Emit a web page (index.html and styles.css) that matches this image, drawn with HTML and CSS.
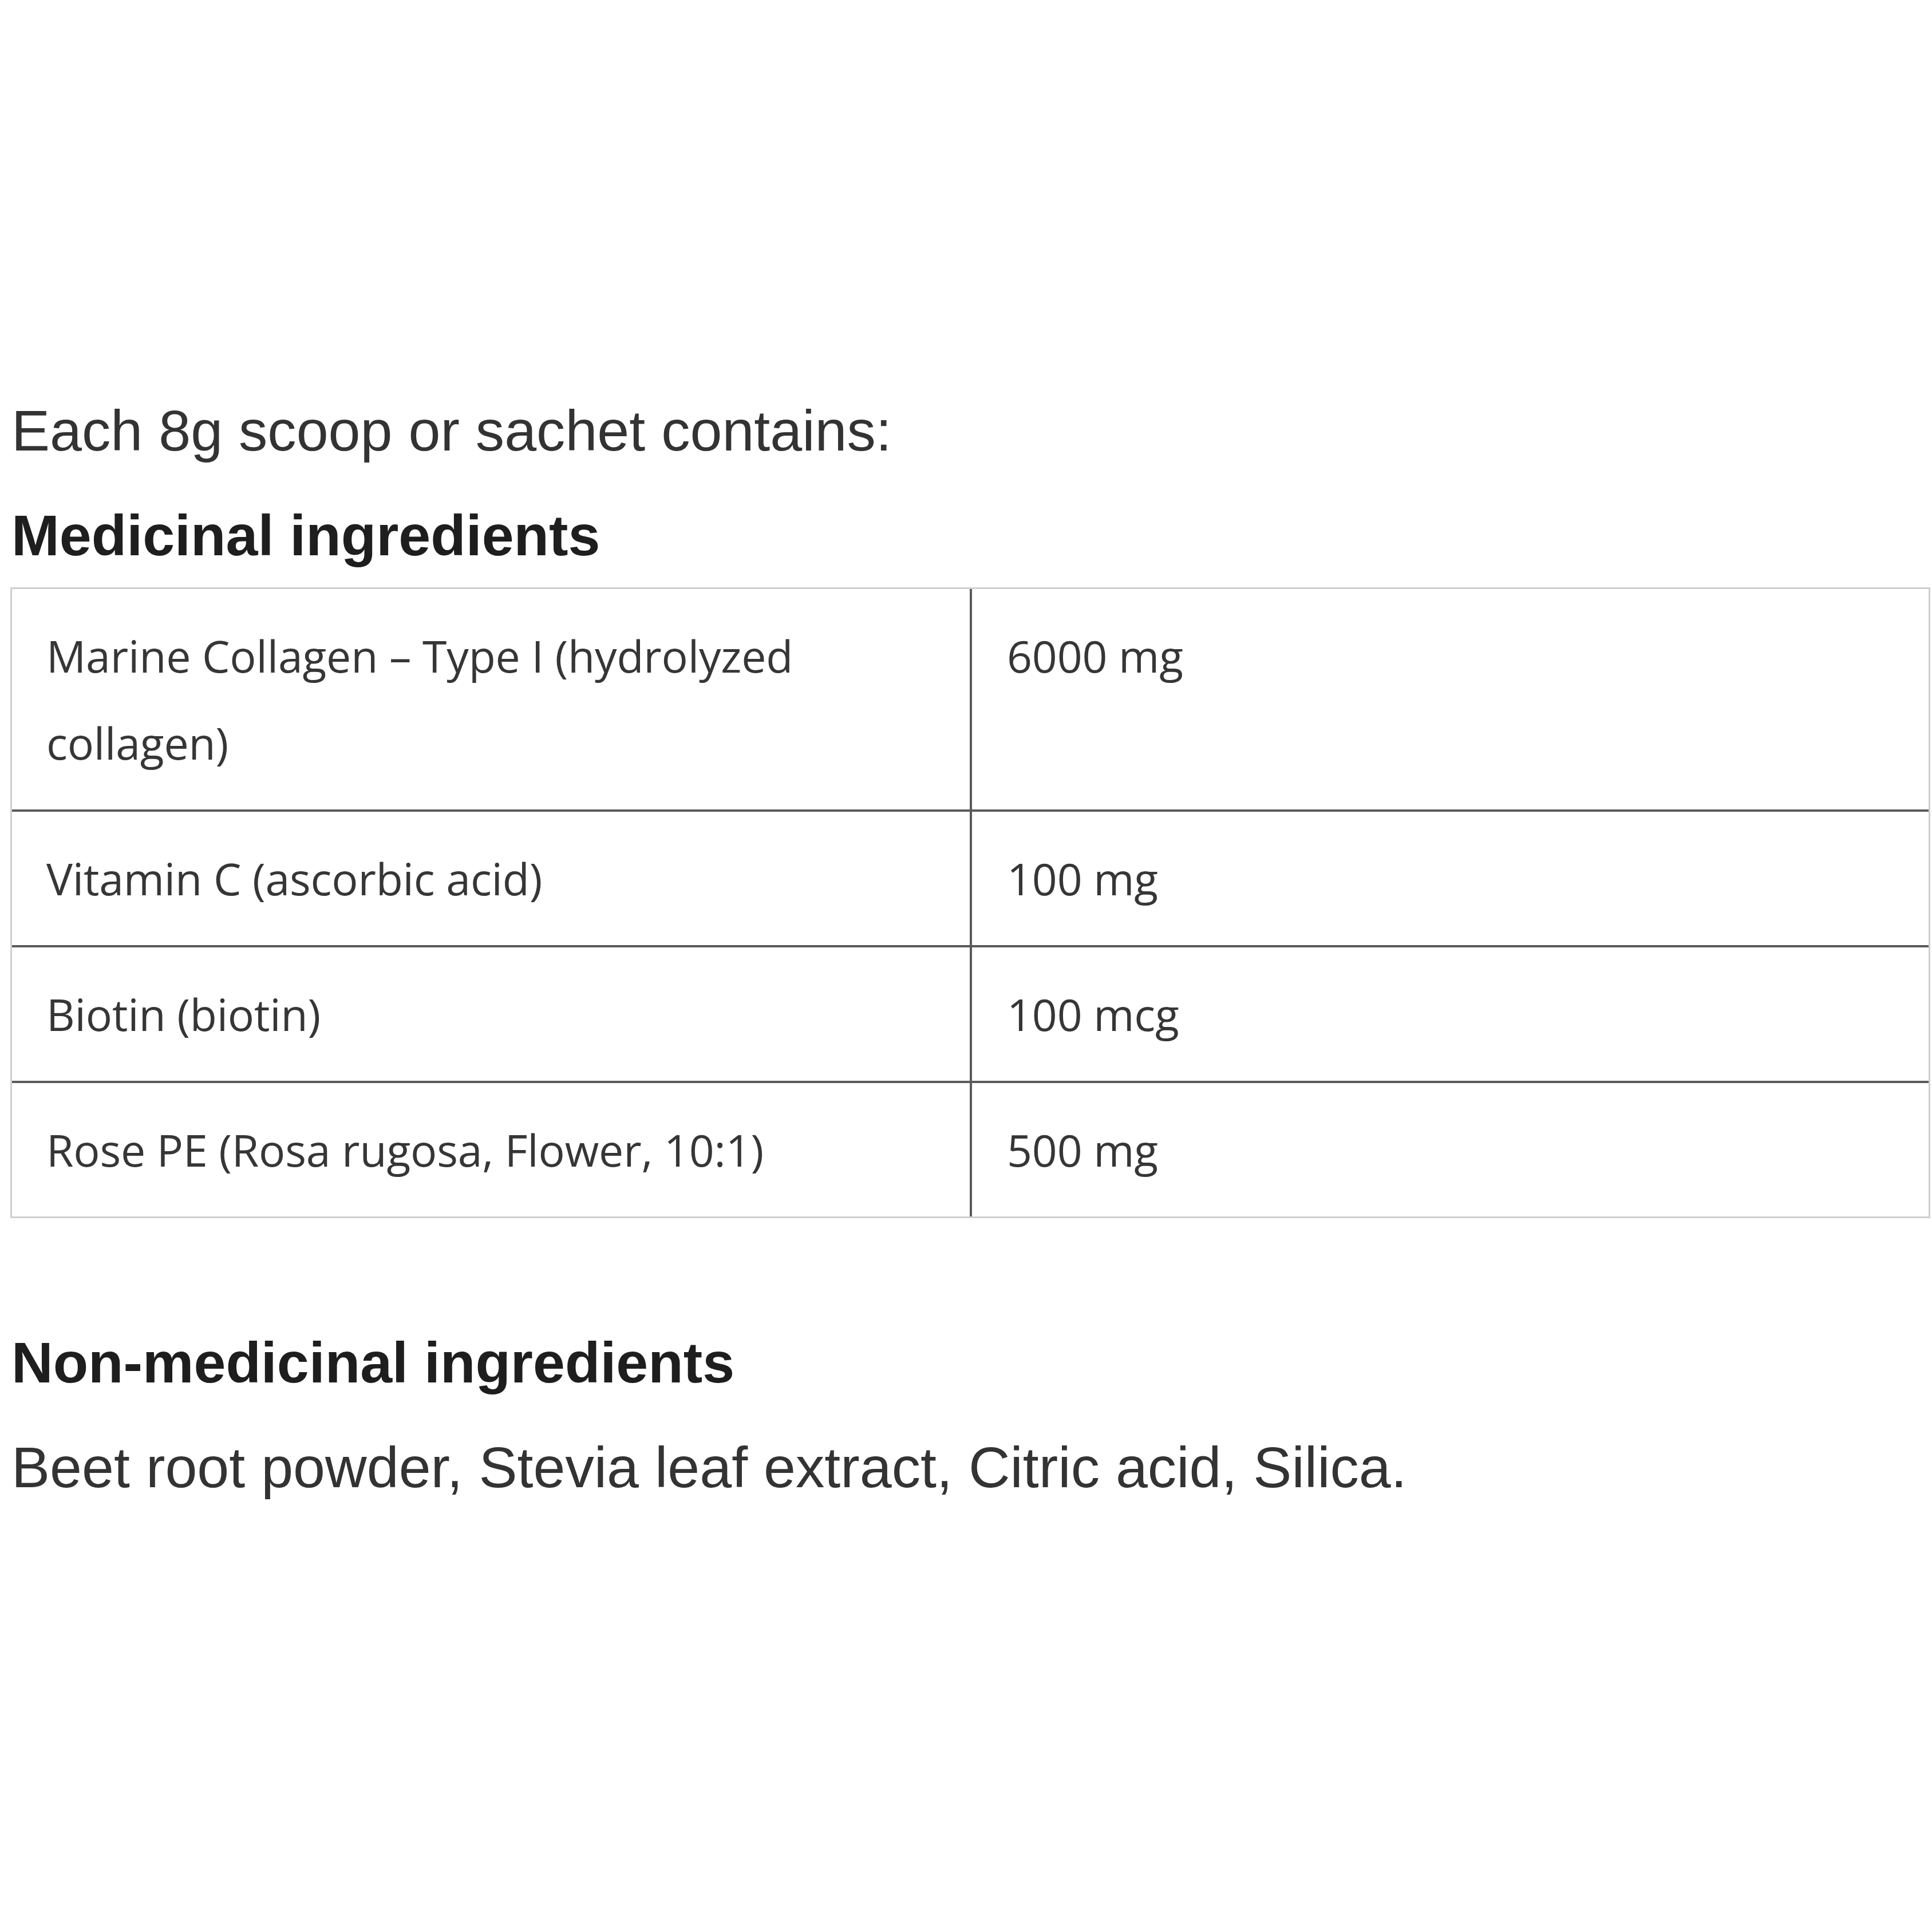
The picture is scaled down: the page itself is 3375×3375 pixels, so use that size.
FILE: index.html
```html
<!DOCTYPE html>
<html lang="en">
<head>
<meta charset="utf-8">
<title>Ingredients</title>
<link rel="stylesheet" href="styles.css">
</head>
<body>
<main class="content">
  <p class="text">Each 8g scoop or sachet contains:</p>
  <h3 class="heading">Medicinal ingredients</h3>
  <table class="ingredients">
    <tbody>
      <tr>
        <td class="name">Marine Collagen – Type I (hydrolyzed collagen)</td>
        <td class="amount">6000 mg</td>
      </tr>
      <tr>
        <td class="name">Vitamin C (ascorbic acid)</td>
        <td class="amount">100 mg</td>
      </tr>
      <tr>
        <td class="name">Biotin (biotin)</td>
        <td class="amount">100 mcg</td>
      </tr>
      <tr>
        <td class="name">Rose PE (Rosa rugosa, Flower, 10:1)</td>
        <td class="amount">500 mg</td>
      </tr>
    </tbody>
  </table>
  <h3 class="heading heading--spaced">Non-medicinal ingredients</h3>
  <p class="text text--spaced">Beet root powder, Stevia leaf extract, Citric acid, Silica.</p>
</main>
</body>
</html>
```

FILE: styles.css
```css
html, body {
  margin: 0;
  padding: 0;
  background: #ffffff;
}

.content {
  box-sizing: border-box;
  width: 3372px;
  padding: 692px 0 0 18px;
  font-family: "Liberation Sans", Arial, sans-serif;
}

.text {
  margin: 0;
  padding-left: 2px;
  font-size: 100.6px;
  line-height: 120px;
  color: #333333;
}

.text--spaced {
  margin-top: 63px;
}

.heading {
  margin: 63px 0 0;
  padding-left: 2px;
  font-size: 100.6px;
  line-height: 120px;
  font-weight: bold;
  color: #1e1e1e;
}

.heading--spaced {
  margin-top: 192px;
}

.ingredients {
  margin-top: 31px;
  width: 3354px;
  table-layout: fixed;
  border-collapse: separate;
  border-spacing: 0;
  border: 3px solid #cfcfcf;
}

.ingredients td {
  box-sizing: border-box;
  vertical-align: top;
  padding: 41px 40px 40px 60px;
  font-family: "Open Sans", "Noto Sans", sans-serif;
  font-size: 77px;
  letter-spacing: -0.2px;
  line-height: 152px;
  color: #363636;
}

.ingredients .name {
  width: 1673px;
}

.ingredients .amount {
  border-left: 4px solid #5a5a5a;
  padding-left: 61px;
}

.ingredients tr + tr td {
  border-top: 4px solid #5a5a5a;
}
```
